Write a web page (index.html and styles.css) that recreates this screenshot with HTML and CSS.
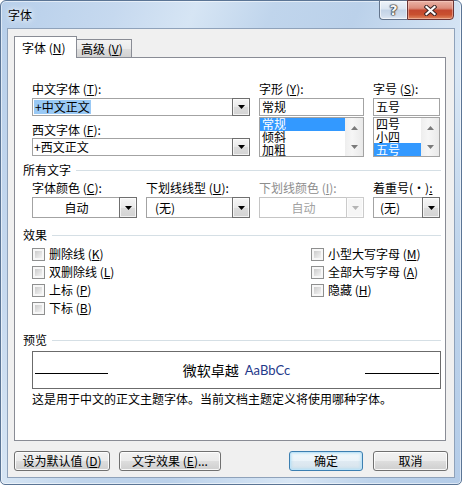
FILE: index.html
```html
<!DOCTYPE html>
<html lang="zh-CN">
<head>
<meta charset="utf-8">
<title>字体</title>
<link rel="stylesheet" href="styles.css">
</head>
<body>
<div class="window">
  <div class="titlebar">
    <div class="title">字体</div>
    <div class="caption">
      <div class="cap help"><span>?</span></div>
      <div class="cap close"><svg width="13" height="11" viewBox="0 0 13 11"><path d="M2.5 2 L10.5 9 M10.5 2 L2.5 9" stroke="#3b2626" stroke-width="4.2" stroke-linecap="square" fill="none"/><path d="M2.5 2 L10.5 9 M10.5 2 L2.5 9" stroke="#ffffff" stroke-width="2.2" stroke-linecap="square" fill="none"/></svg></div>
    </div>
  </div>
  <div class="client">
    <div class="tabs">
      <div class="tab active">字体 (<u>N</u>)</div>
      <div class="tab inactive">高级 (<u>V</u>)</div>
    </div>
    <div class="panel">
      <div class="font-grid">
        <div class="col col-wide">
          <div class="lbl">中文字体 (<u>T</u>):</div>
          <div class="combo h18 mt2"><div class="val"><span class="sel-soft">+中文正文</span></div><div class="dd"><svg class="tri" width="7" height="4" viewBox="0 0 7 4"><path d="M0 0H7L3.5 4Z"/></svg></div></div>
          <div class="lbl mt7">西文字体 (<u>F</u>):</div>
          <div class="combo h18 mt1"><div class="val">+西文正文</div><div class="dd"><svg class="tri" width="7" height="4" viewBox="0 0 7 4"><path d="M0 0H7L3.5 4Z"/></svg></div></div>
        </div>
        <div class="col">
          <div class="lbl">字形 (<u>Y</u>):</div>
          <div class="input mt2">常规</div>
          <div class="listbox">
            <div class="items">
              <div class="item selected">常规</div>
              <div class="item">倾斜</div>
              <div class="item">加粗</div>
            </div>
            <div class="vscroll">
              <div class="sb-btn"><svg width="7" height="4" viewBox="0 0 7 4"><path d="M0 4H7L3.5 0Z"/></svg></div>
              <div class="sb-btn"><svg width="7" height="4" viewBox="0 0 7 4"><path d="M0 0H7L3.5 4Z"/></svg></div>
            </div>
          </div>
        </div>
        <div class="col">
          <div class="lbl">字号 (<u>S</u>):</div>
          <div class="input mt2">五号</div>
          <div class="listbox">
            <div class="items">
              <div class="item">四号</div>
              <div class="item">小四</div>
              <div class="item selected">五号</div>
            </div>
            <div class="vscroll">
              <div class="sb-btn"><svg width="7" height="4" viewBox="0 0 7 4"><path d="M0 4H7L3.5 0Z"/></svg></div>
              <div class="sb-btn"><svg width="7" height="4" viewBox="0 0 7 4"><path d="M0 0H7L3.5 4Z"/></svg></div>
            </div>
          </div>
        </div>
      </div>

      <div class="group-label gl-all">所有文字</div>
      <div class="attr-grid">
        <div class="col">
          <div class="lbl">字体颜色 (<u>C</u>):</div>
          <div class="combo h21 mt2"><div class="val center">自动</div><div class="dd"><svg class="tri" width="7" height="4" viewBox="0 0 7 4"><path d="M0 0H7L3.5 4Z"/></svg></div></div>
        </div>
        <div class="col">
          <div class="lbl">下划线线型 (<u>U</u>):</div>
          <div class="combo h21 mt2"><div class="val pad8">(无)</div><div class="dd"><svg class="tri" width="7" height="4" viewBox="0 0 7 4"><path d="M0 0H7L3.5 4Z"/></svg></div></div>
        </div>
        <div class="col">
          <div class="lbl disabled">下划线颜色 (<u>I</u>):</div>
          <div class="combo h21 mt2 is-disabled"><div class="val center">自动</div><div class="dd"><svg class="tri" width="7" height="4" viewBox="0 0 7 4"><path d="M0 0H7L3.5 4Z"/></svg></div></div>
        </div>
        <div class="col">
          <div class="lbl nowrap">着重号(·)<u>:</u></div>
          <div class="combo h21 mt2"><div class="val pad6">(无)</div><div class="dd"><svg class="tri" width="7" height="4" viewBox="0 0 7 4"><path d="M0 0H7L3.5 4Z"/></svg></div></div>
        </div>
      </div>

      <div class="group-label gl-effects">效果</div>
      <div class="effects">
        <div class="effects-col">
          <div class="check"><span class="box"></span><span>删除线 (<u>K</u>)</span></div>
          <div class="check"><span class="box"></span><span>双删除线 (<u>L</u>)</span></div>
          <div class="check"><span class="box"></span><span>上标 (<u>P</u>)</span></div>
          <div class="check"><span class="box"></span><span>下标 (<u>B</u>)</span></div>
        </div>
        <div class="effects-col">
          <div class="check"><span class="box"></span><span>小型大写字母 (<u>M</u>)</span></div>
          <div class="check"><span class="box"></span><span>全部大写字母 (<u>A</u>)</span></div>
          <div class="check"><span class="box"></span><span>隐藏 (<u>H</u>)</span></div>
        </div>
      </div>

      <div class="group-label gl-preview">预览</div>
      <div class="preview">
        <div class="pv-line left"></div>
        <div class="pv-text"><span class="pv-cjk">微软卓越</span><span class="pv-latin">AaBbCc</span></div>
        <div class="pv-line right"></div>
      </div>
      <div class="desc">这是用于中文的正文主题字体。当前文档主题定义将使用哪种字体。</div>
    </div>

    <div class="buttons">
      <div class="btn w-default">设为默认值 (<u>D</u>)</div>
      <div class="btn w-effects">文字效果 (<u>E</u>)...</div>
      <div class="btn w-ok primary">确定</div>
      <div class="btn w-cancel">取消</div>
    </div>
  </div>
</div>
</body>
</html>
```

FILE: styles.css
```css
* { box-sizing: border-box; }
html, body { margin: 0; padding: 0; }
body {
  width: 462px;
  height: 485px;
  overflow: hidden;
  background: #ffffff;
  font-family: "Noto Sans CJK SC", "Noto Sans", sans-serif;
  font-size: 12px;
  line-height: 14px;
  color: #000;
}
u { text-decoration: underline; text-underline-offset: 1px; }

.window {
  width: 462px;
  height: 485px;
  border: 1px solid #5b7595;
  border-radius: 6px 6px 5px 5px;
  background: linear-gradient(112deg, #b7cfea 0%, #c6d9ef 18%, #d6e5f4 30%, #c0d5ec 42%, #bbd1ea 55%, #cfe0f2 68%, #d9e7f5 74%, #bdd3eb 86%, #b4cce8 100%);
  box-shadow: inset 0 0 0 1px rgba(255,255,255,0.55);
  display: flex;
  flex-direction: column;
}

.titlebar {
  height: 27px;
  display: flex;
  justify-content: space-between;
  align-items: flex-start;
  padding: 0 7px 0 7px;
}
.title {
  align-self: center;
  margin-top: 1px;
  text-shadow: 0 0 5px #ffffff, 0 0 8px rgba(255,255,255,0.9);
}
.caption { display: flex; margin-top: -1px; }
.cap {
  height: 20px;
  display: flex;
  align-items: center;
  justify-content: center;
}
.help {
  width: 28px;
  border: 1px solid #63748c;
  border-right: none;
  border-radius: 0 0 0 4px;
  background: linear-gradient(#eef3f9, #dbe5f1 45%, #c3d3e6 50%, #cfdcec 80%, #dfe8f3);
  box-shadow: inset 0 0 0 1px rgba(255,255,255,0.6);
}
.help span {
  font-family: "DejaVu Sans", sans-serif;
  font-weight: bold;
  font-size: 14px;
  line-height: 14px;
  color: #f6f6f6;
  text-shadow: 0 0 1px #222, 0 0 1px #222, 0 0 1px #222, 0 0 2px #333;
}
.close {
  width: 47px;
  border: 1px solid #6b3535;
  border-radius: 0 0 4px 0;
  background: linear-gradient(#eab3a6, #dc8c7b 40%, #c4482f 52%, #c9502f 75%, #e0875f);
  box-shadow: inset 0 0 0 1px rgba(255,220,210,0.45);
}

.client {
  flex: 1;
  margin: 0 6px 6px 6px;
  background: #f0f0f0;
  border: 1px solid #8fa2ba;
  display: flex;
  flex-direction: column;
}

.tabs {
  display: flex;
  align-items: flex-end;
  margin: 7px 0 0 6px;
  height: 21px;
  position: relative;
  z-index: 1;
}
.tab {
  border: 1px solid #898c95;
  border-bottom: none;
}
.tab.active {
  width: 63px;
  height: 22px;
  margin-bottom: -1px;
  background: #ffffff;
  padding: 4px 0 0 7px;
}
.tab.inactive {
  width: 55px;
  height: 18px;
  border-left: none;
  background: linear-gradient(#f3f3f3, #ebebeb 50%, #dedede 50%, #d2d2d2);
  padding: 2px 0 0 4px;
}

.panel {
  margin-left: 6px;
  width: 432px;
  height: 384px;
  background: #ffffff;
  border: 1px solid #898c95;
  padding: 0 4px 0 8px;
}

.lbl { height: 14px; white-space: nowrap; }
.lbl.disabled { color: #8d8d8d; }
.mt1 { margin-top: 1px; }
.mt2 { margin-top: 2px; }
.mt7 { margin-top: 7px; }

.font-grid {
  margin-left: 9px;
  padding-top: 24px;
  display: grid;
  grid-template-columns: 218px 105px 67px;
  column-gap: 9px;
}
.attr-grid {
  margin-left: 9px;
  margin-top: 4px;
  display: grid;
  grid-template-columns: 105px 104px 105px 67px;
  column-gap: 9px;
}
.col { display: flex; flex-direction: column; min-width: 0; }

.combo {
  display: flex;
  border: 1px solid #a3a3a3;
  background: #fff;
}
.combo.h18 { height: 18px; }
.combo.h21 { height: 21px; }
.combo .val {
  flex: 1;
  display: flex;
  align-items: center;
  padding-left: 1px;
  white-space: nowrap;
  overflow: hidden;
}
.combo .val.center { justify-content: center; }
.combo .val.pad8 { padding-left: 8px; }
.combo .val.pad6 { padding-left: 6px; }
.sel-soft {
  background: #99c9f5;
  padding: 0 1px 0 1px;
  line-height: 14px;
}
.dd {
  width: 18px;
  margin: -1px -1px -1px 0;
  border: 1px solid #6f6f6f;
  background: linear-gradient(#f6f6f6, #e9e9e9 50%, #dcdcdc 50%, #d3d3d3);
  box-shadow: inset 0 0 0 1px rgba(255,255,255,0.7);
  display: flex;
  align-items: center;
  justify-content: center;
  color: #000;
}
.dd .tri { fill: currentColor; display: block; }
.combo.is-disabled { border-color: #c5c5c5; }
.combo.is-disabled .val { color: #a2a2a2; }
.combo.is-disabled .dd {
  border-color: #cbcbcb;
  background: #f6f6f6;
  color: #b4b4b4;
}

.input {
  height: 18px;
  border: 1px solid #a3a3a3;
  padding: 1px 0 0 2px;
  white-space: nowrap;
}
.listbox {
  margin-top: 1px;
  height: 40px;
  border: 1px solid #a3a3a3;
  display: flex;
}
.items { flex: 1; display: flex; flex-direction: column; }
.item {
  flex: 1;
  padding-left: 2px;
  display: flex;
  align-items: center;
  line-height: 12px;
}
.item.selected { background: #3399ff; color: #ffffff; }
.vscroll {
  width: 18px;
  display: flex;
  flex-direction: column;
  background: linear-gradient(90deg, #eeeeee, #f6f6f6 40%, #e9e9e9);
}
.sb-btn {
  flex: 1;
  display: flex;
  align-items: center;
  justify-content: center;
  fill: #7a7a7a;
}
.sb-btn svg { display: block; }

.group-label {
  display: flex;
  align-items: center;
  gap: 5px;
  height: 14px;
}
.group-label::after {
  content: "";
  flex: 1;
  height: 1px;
  background: #d5dfe5;
}
.gl-all { margin-top: 6px; }
.gl-effects { margin-top: 10px; }
.gl-preview { margin-top: 16px; }

.effects {
  margin: 3px 0 0 9px;
  display: grid;
  grid-template-columns: 279px 1fr;
}
.check {
  height: 18px;
  display: flex;
  align-items: center;
  gap: 4px;
  white-space: nowrap;
}
.box {
  width: 13px;
  height: 13px;
  border: 1px solid #8e8f8f;
  padding: 2px;
  background: linear-gradient(135deg, #cbcbcb, #f3f3f3) content-box, #f7f7f7;
  flex: none;
}

.preview {
  margin: 4px 0 0 9px;
  height: 38px;
  border: 1px solid #6b6b6b;
  display: flex;
  align-items: center;
}
.pv-line {
  height: 1px;
  background: #000;
  margin-top: 7px;
}
.pv-line.left { width: 73px; margin-left: 2px; }
.pv-line.right { width: 74px; margin-right: 1px; }
.pv-text {
  flex: 1;
  display: flex;
  justify-content: center;
  align-items: center;
  gap: 6px;
}
.pv-cjk { font-size: 14px; line-height: 16px; }
.pv-latin {
  font-family: "Lato", "Open Sans", sans-serif;
  font-size: 13px;
  line-height: 16px;
  color: #1f3a8a;
}
.desc { margin: 3px 0 0 9px; white-space: nowrap; }

.buttons {
  display: flex;
  margin: 10px 6px 0 6px;
}
.btn {
  height: 20px;
  border: 1px solid #707070;
  border-radius: 3px;
  background: linear-gradient(#f2f2f2, #ebebeb 48%, #dddddd 52%, #cfcfcf);
  box-shadow: inset 0 0 0 1px rgba(255,255,255,0.85);
  display: flex;
  align-items: center;
  justify-content: center;
  white-space: nowrap;
}
.w-default { width: 96px; }
.w-effects { width: 102px; margin-left: 9px; }
.w-ok { width: 74px; margin-left: auto; }
.w-cancel { width: 75px; margin-left: 10px; }
.btn.primary {
  border-color: #3c7fb1;
  background: linear-gradient(#f4f9fc, #eaf3f9 48%, #dfeaf2 52%, #d6e3ec);
  box-shadow: inset 0 0 0 1px #bfe3f7, inset 0 0 2px 2px rgba(170,220,245,0.5);
}
```
